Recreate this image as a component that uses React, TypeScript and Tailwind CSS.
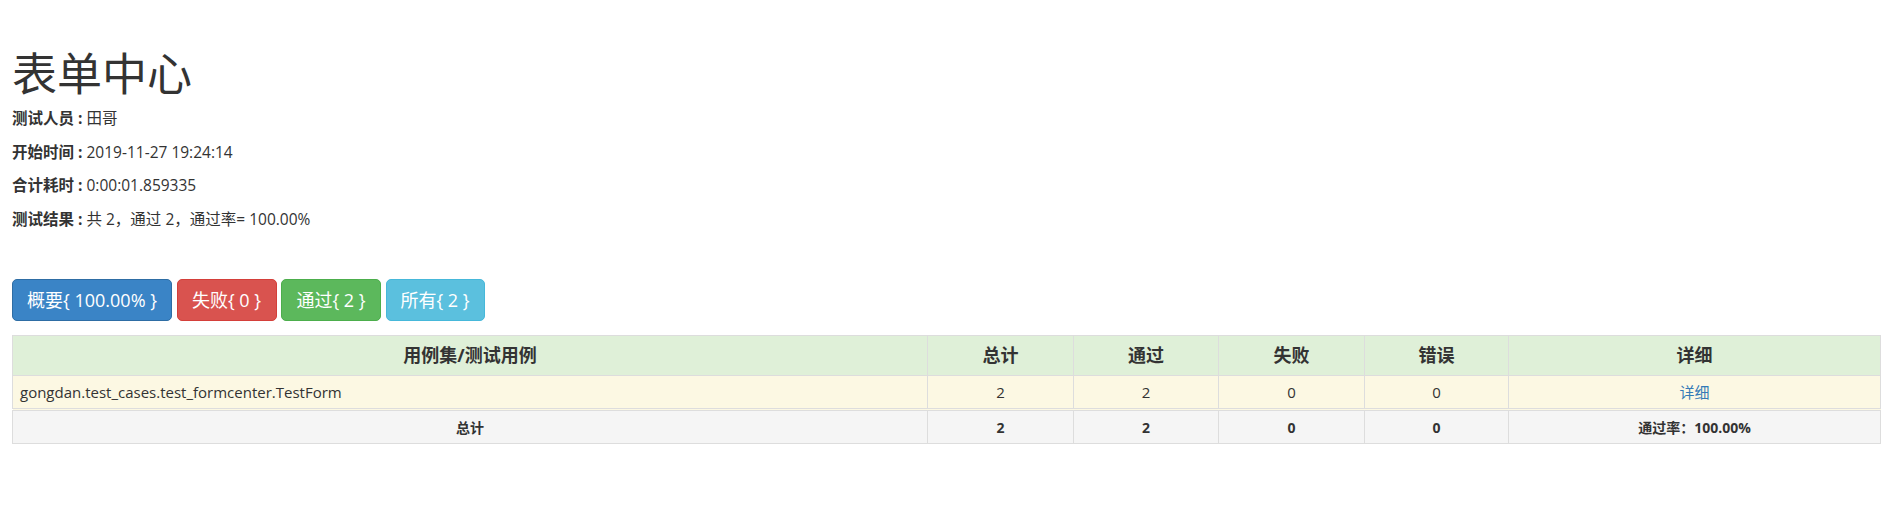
const font = "font-['Open_Sans','Noto_Sans_CJK_SC',sans-serif]";

type Info = { label: string; value: string };

const infos: Info[] = [
  { label: "测试人员 : ", value: "田哥" },
  { label: "开始时间 : ", value: "2019-11-27 19:24:14" },
  { label: "合计耗时 : ", value: "0:00:01.859335" },
  { label: "测试结果 : ", value: "共 2，通过 2，通过率= 100.00%" },
];

const buttons = [
  { text: "概要{ 100.00% }", cls: "w-[160px] bg-[#3a84c6] border-[#2e6da4]" },
  { text: "失败{ 0 }", cls: "w-[100px] bg-[#d9534f] border-[#d43f3a]" },
  { text: "通过{ 2 }", cls: "w-[100px] bg-[#5cb85c] border-[#4cae4c]" },
  { text: "所有{ 2 }", cls: "w-[99px] bg-[#5bc0de] border-[#46b8da]" },
];

export default function App() {
  return (
    <div className={`${font} min-h-screen bg-white px-3 pt-[49px] text-[#333]`}>
      <h1 className="h-[50px] text-[45px] font-normal leading-[50px]">表单中心</h1>

      <div className="mt-[3px] flex flex-col">
        {infos.map((i) => (
          <p key={i.label} className="text-[15.5px] leading-[33.5px]">
            <strong className="font-bold">{i.label}</strong>
            {i.value}
          </p>
        ))}
      </div>

      <div className="mt-[43px] flex gap-[4.5px]">
        {buttons.map((b) => (
          <button
            key={b.text}
            className={`${b.cls} h-[42px] rounded-[5px] border text-center text-[18px] text-white`}
          >
            {b.text}
          </button>
        ))}
      </div>

      <table className="mt-[14px] w-[1869px] table-fixed border-collapse border border-[#ddd]">
        <colgroup>
          <col className="w-[915px]" />
          <col className="w-[146px]" />
          <col className="w-[145px]" />
          <col className="w-[146px]" />
          <col className="w-[144px]" />
          <col />
        </colgroup>
        <thead>
          <tr className="h-[40px] bg-[#dff0d8] text-[18px] font-bold">
            <th className="border border-[#ddd]">用例集/测试用例</th>
            <th className="border border-[#ddd]">总计</th>
            <th className="border border-[#ddd]">通过</th>
            <th className="border border-[#ddd]">失败</th>
            <th className="border border-[#ddd]">错误</th>
            <th className="border border-[#ddd]">详细</th>
          </tr>
        </thead>
        <tbody>
          <tr className="h-[34px] bg-[#fcf8e3] text-[15px]">
            <td className="border border-[#ddd] px-[7px] text-left">
              gongdan.test_cases.test_formcenter.TestForm
            </td>
            <td className="border border-[#ddd] text-center">2</td>
            <td className="border border-[#ddd] text-center">2</td>
            <td className="border border-[#ddd] text-center">0</td>
            <td className="border border-[#ddd] text-center">0</td>
            <td className="border border-[#ddd] text-center">
              <a className="text-[#337ab7]">详细</a>
            </td>
          </tr>
          <tr className="h-[34px] border-t-[3px] border-double border-[#ddd] bg-[#f5f5f5] text-[14px] font-bold">
            <td className="border border-[#ddd] text-center">总计</td>
            <td className="border border-[#ddd] text-center">2</td>
            <td className="border border-[#ddd] text-center">2</td>
            <td className="border border-[#ddd] text-center">0</td>
            <td className="border border-[#ddd] text-center">0</td>
            <td className="border border-[#ddd] text-center">通过率：100.00%</td>
          </tr>
        </tbody>
      </table>
    </div>
  );
}
